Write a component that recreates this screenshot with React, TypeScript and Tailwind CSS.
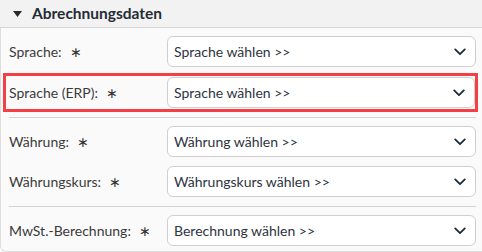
import React from 'react';

const Chevron = () => (
  <svg width="12" height="8" viewBox="0 0 12 8" fill="none" className="shrink-0">
    <path d="M1.2 1.4 6 6.2l4.8-4.8" stroke="#1c2b3a" strokeWidth="1.8" strokeLinecap="round" strokeLinejoin="round" />
  </svg>
);

const Row = ({ label, placeholder }: { label: string; placeholder: string }) => (
  <div className="flex items-center h-[31px]">
    <div className="w-[158px] shrink-0 flex items-center text-[14px] text-[#3a3a3a]">
      <span>{label}</span>
      <span className="ml-[8px] text-[14px] text-[#333]">∗</span>
    </div>
    <div className="flex-1 h-full flex items-center justify-between bg-white border border-[#cfcfcf] rounded-[6px] pl-[6px] pr-[9px] text-[14px] text-[#2e3440]">
      <span>{placeholder}</span>
      <Chevron />
    </div>
  </div>
);

export default function App() {
  return (
    <div className="w-[482px] h-[252px] bg-white overflow-hidden" style={{ fontFamily: 'Lato, "Noto Sans", sans-serif' }}>
      <div className="h-[28px] bg-[#f2f2f2] border-b border-[#d6d6d6] flex items-center pl-[13px]">
        <svg width="9" height="6" viewBox="0 0 9 6" className="mr-[10px]">
          <path d="M0 0h9L4.5 6z" fill="#2a2a2a" />
        </svg>
        <span className="font-bold text-[15.5px] text-[#262c35]">Abrechnungsdaten</span>
      </div>
      <div className="h-[224px] bg-[#fafafa] border-l border-b border-[#dedede] rounded-bl-[6px] pl-[8px] pr-[6px] pt-[8px]">
        <Row label="Sprache:" placeholder="Sprache wählen >>" />
        <div className="mt-[6px] -ml-[6px] -mr-[2px] border-[3px] border-[#f43f47] pl-[3px] pt-[1px] pb-[1px]">
          <Row label="Sprache (ERP):" placeholder="Sprache wählen >>" />
        </div>
        <div className="mt-[5px] h-px bg-[#d4d4d4]" />
        <div className="mt-[8px] flex flex-col gap-[9px]">
          <Row label="Währung:" placeholder="Währung wählen >>" />
          <Row label="Währungskurs:" placeholder="Währungskurs wählen >>" />
        </div>
        <div className="mt-[9px] h-px bg-[#d4d4d4]" />
        <div className="mt-[8px]">
          <Row label="MwSt.-Berechnung:" placeholder="Berechnung wählen >>" />
        </div>
      </div>
    </div>
  );
}
